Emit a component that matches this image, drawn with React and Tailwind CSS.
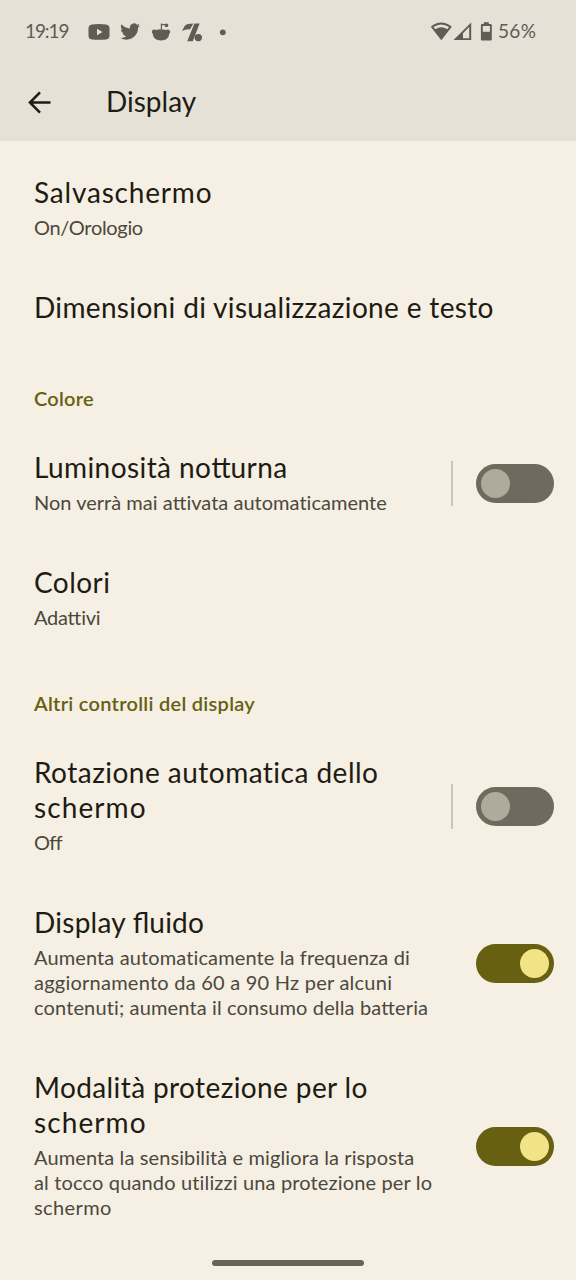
import React from "react";

// Letter pairs that stay joined even where the line is tracked.
function Line({ text, className = "" }) {
  return (
    <span className={`block w-max whitespace-pre ${className}`}>
      {text.split(/(tt|ff|fl)/).map((part, i) =>
        i % 2 ? <span key={i} className="tracking-normal">{part}</span> : part
      )}
    </span>
  );
}

function Switch({ on }) {
  return (
    <div
      role="switch"
      aria-checked={on}
      className={`flex h-[39px] w-[78px] shrink-0 items-center rounded-full px-[5px] ${
        on ? "justify-end bg-[#675f11]" : "justify-start bg-[#6f6a5e]"
      }`}
    >
      <div className={`size-[29px] rounded-full ${on ? "bg-[#f1e386]" : "bg-[#aeab9a]"}`} />
    </div>
  );
}

function Row({ title, summary = [], toggle, divider }) {
  return (
    <div className="flex items-center py-[25px] pr-[22px] pl-[34px]">
      <div className="-mt-px mb-px min-w-0 flex-1">
        <div className="text-[28px] leading-[35px] text-[#201b13]">
          {title.map(([t, c]) => <Line key={t} text={t} className={c} />)}
        </div>
        {summary.length > 0 && (
          <div className="mt-[5px] text-[20px] leading-[25px] text-[#4c483d]">
            {summary.map(([t, c]) => <Line key={t} text={t} className={c} />)}
          </div>
        )}
      </div>
      {divider && <div className="mr-[23px] h-[45px] w-[2px] bg-[#cbc6b9]" />}
      {toggle && <Switch on={toggle === "on"} />}
    </div>
  );
}

function Section({ text, className }) {
  return (
    <div className="flex h-[75px] items-center pt-[20px] pl-[34px] text-[20px] leading-[25px] font-semibold text-[#675f11]">
      <Line text={text} className={className} />
    </div>
  );
}

function StatusBar() {
  return (
    <div className="flex h-[63px] items-center text-[19px] text-[#5f5b55]">
      <div className="ml-[25px] w-[44px]">
        <Line text="19:19" className="tracking-[-1.1px]" />
      </div>
      <svg className="ml-[19px]" width="140" height="24" viewBox="0 0 140 24" fill="currentColor">
        <path fillRule="evenodd" d="M4 4.5Q11 3.5 18 4.5Q21.5 5 21.5 8V16Q21.5 19 18 19.5Q11 20 4 19.5Q.5 19 .5 16V8Q.5 5 4 4.5ZM9 8.8V15.2L14.5 12Z" />
        <g transform="translate(32.2 1.6) scale(.83)">
          <path d="M23.95 4.57a10 10 0 0 1-2.82.77 4.96 4.96 0 0 0 2.16-2.72c-.95.55-2 .96-3.13 1.18a4.92 4.92 0 0 0-8.38 4.48C7.69 8.1 4.07 6.13 1.64 3.16a4.9 4.9 0 0 0 1.52 6.57 4.9 4.9 0 0 1-2.23-.61v.06a4.92 4.92 0 0 0 3.95 4.83 5 5 0 0 1-2.21.08 4.94 4.94 0 0 0 4.6 3.42A9.87 9.87 0 0 1 0 19.54a13.99 13.99 0 0 0 7.55 2.21c9.05 0 14-7.5 14-13.98 0-.21 0-.42-.02-.63a9.94 9.94 0 0 0 2.46-2.55z" />
        </g>
        <path d="M65 9.8Q66.5 9 68 9.9Q73 8.4 78 9.9Q79.5 9 81 9.8Q83.2 11.8 81.3 13.8Q80.5 20.5 73 20.5T64.7 13.8Q62.8 11.8 65 9.8Z" />
        <path d="M73.4 9V4.3L78 5" fill="none" stroke="currentColor" strokeWidth="1.2" />
        <circle cx="78.5" cy="5.4" r="1.8" />
        <path d="M94 11L96.5 6.2Q97.8 4.2 100 4L105.4 3.4L101.9 9.4Q98.5 8.6 94 11ZM106.4 3.4H111.6L104.8 21.2H99.2Z" />
        <circle cx="110.3" cy="17.6" r="3.7" />
        <circle cx="134.8" cy="12.3" r="2.9" />
      </svg>
      <svg className="ml-[202px]" width="64" height="24" viewBox="430 20 64 24" fill="currentColor">
        <path fillRule="evenodd" d="M430.8 26.7Q441 18.3 451.8 26.7L441.3 40.2ZM433.5 27.1L435.3 29.3Q441.3 25 447.3 29.3L449.1 27.1Q441.3 22 433.5 27.1Z" />
        <path fillRule="evenodd" d="M453.5 40L471.2 22.5V40ZM463 33.2V38.2H469.2V27Z" />
        <path fillRule="evenodd" d="M483.8 22.3H488.8V24H490.7Q491.8 24 491.8 25.2V39.2Q491.8 40.4 490.7 40.4H482Q480.9 40.4 480.9 39.2V25.2Q480.9 24 482 24H483.8ZM482.8 26V31.8H489.9V26Z" />
      </svg>
      <Line text="56%" className="ml-[4px] tracking-[0.3px]" />
    </div>
  );
}

export default function App() {
  return (
    <div className="flex h-[1280px] w-[576px] flex-col overflow-hidden bg-[#f5efe4] font-['Lato',sans-serif]">
      <header className="h-[141px] shrink-0 bg-[#e6e1d7]">
        <StatusBar />
        <div className="flex h-[78px] items-center text-[#201b13]">
          <svg className="ml-[27px]" width="25" height="25" viewBox="0 0 25 25" fill="none" stroke="currentColor" strokeWidth="2.5">
            <path d="M23.5 12.5H3M13 2.4L2.9 12.5L13 22.6" />
          </svg>
          <Line text="Display" className="ml-[54px] pb-px text-[28px] leading-[35px]" />
        </div>
      </header>
      <main className="flex-1 pt-[10px]">
        <Row title={[["Salvaschermo", "tracking-[0.82px]"]]} summary={[["On/Orologio", "tracking-[-0.32px]"]]} />
        <Row title={[["Dimensioni di visualizzazione e testo", "tracking-[0.34px]"]]} />
        <Section text="Colore" className="tracking-[0.25px]" />
        <Row
          title={[["Luminosità notturna", "tracking-[0.42px]"]]}
          summary={[["Non verrà mai attivata automaticamente", "tracking-[0.02px]"]]}
          toggle="off"
          divider
        />
        <Row title={[["Colori", "tracking-[0.45px]"]]} summary={[["Adattivi", "tracking-[-0.3px]"]]} />
        <Section text="Altri controlli del display" className="tracking-[0.28px]" />
        <Row
          title={[["Rotazione automatica dello", "tracking-[0.48px]"], ["schermo", "tracking-[1.1px]"]]}
          summary={[["Off", "tracking-[-0.8px]"]]}
          toggle="off"
          divider
        />
        <Row
          title={[["Display fluido", "tracking-[0.26px]"]]}
          summary={[
            ["Aumenta automaticamente la frequenza di", "tracking-[0.12px]"],
            ["aggiornamento da 60 a 90 Hz per alcuni", "tracking-[0.24px]"],
            ["contenuti; aumenta il consumo della batteria", "tracking-[0.14px]"],
          ]}
          toggle="on"
        />
        <Row
          title={[["Modalità protezione per lo", "tracking-[0.39px]"], ["schermo", "tracking-[1.1px]"]]}
          summary={[
            ["Aumenta la sensibilità e migliora la risposta", "tracking-[0.11px]"],
            ["al tocco quando utilizzi una protezione per lo", "tracking-[0.15px]"],
            ["schermo", "tracking-[0.4px]"],
          ]}
          toggle="on"
        />
      </main>
      <footer className="flex h-[20px] shrink-0 justify-center">
        <div className="h-[6px] w-[152px] rounded-full bg-[#67635a]" />
      </footer>
    </div>
  );
}
